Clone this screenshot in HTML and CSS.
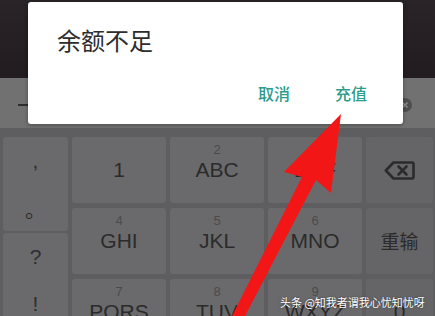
FILE: index.html
```html
<!DOCTYPE html>
<html>
<head>
<meta charset="utf-8">
<link rel="stylesheet" href="styles.css">
</head>
<body>
<div class="screen">
  <div class="top"></div>
  <div class="candbar">
    <span class="cursor"></span>
    <svg class="clear" width="14" height="14" viewBox="0 0 14 14"><circle cx="7" cy="7" r="7" fill="#4e4e4e"/><path d="M4.5 4.5 L9.5 9.5 M9.5 4.5 L4.5 9.5" stroke="#8a8a8a" stroke-width="1.6"/></svg>
  </div>
  <div class="keyboard">
    <div class="side">
      <div class="sidebox">
        <div class="sidekey">,</div>
        <div class="sidekey">。</div>
      </div>
      <div class="sidebox">
        <div class="sidekey">?</div>
        <div class="sidekey">!</div>
      </div>
    </div>
    <div class="key"><span class="num"></span><span class="lab">1</span></div>
    <div class="key"><span class="num">2</span><span class="lab">ABC</span></div>
    <div class="key"><span class="num">3</span><span class="lab">DEF</span></div>
    <div class="key fn">
      <svg class="bksp" width="31" height="19" viewBox="0 0 31 19"><path d="M9.5 1.5 H28 Q29.5 1.5 29.5 3 V16 Q29.5 17.5 28 17.5 H9.5 L1.8 9.5 Z" fill="none" stroke="#2b2b2b" stroke-width="2.6" stroke-linejoin="round"/><path d="M14.5 5.5 L22.5 13.5 M22.5 5.5 L14.5 13.5" stroke="#2b2b2b" stroke-width="2.6" stroke-linecap="round"/></svg>
    </div>
    <div class="key"><span class="num">4</span><span class="lab">GHI</span></div>
    <div class="key"><span class="num">5</span><span class="lab">JKL</span></div>
    <div class="key"><span class="num">6</span><span class="lab">MNO</span></div>
    <div class="key fn"><span class="cn">重输</span></div>
    <div class="key"><span class="num">7</span><span class="lab">PQRS</span></div>
    <div class="key"><span class="num">8</span><span class="lab">TUV</span></div>
    <div class="key"><span class="num">9</span><span class="lab">WXYZ</span></div>
    <div class="key fn"><span class="num"></span><span class="lab">0</span></div>
  </div>

  <div class="dialog">
    <div class="title">余额不足</div>
    <div class="actions">
      <span class="btn">取消</span>
      <span class="btn">充值</span>
    </div>
  </div>

  <svg class="arrow" width="435" height="316" viewBox="0 0 435 316">
    <polygon points="341,114 331,193 316,180 244,318 231,318 302,177 284,172" fill="#f31616"/>
  </svg>

  <div class="watermark">头条 @知我者谓我心忧知忧呀</div>
</div>
</body>
</html>
```
FILE: styles.css
```css
html, body {
  margin: 0;
  padding: 0;
}
body {
  width: 435px;
  height: 316px;
  overflow: hidden;
  background: #5d5d5f;
  font-family: "Liberation Sans", "Noto Sans CJK SC", sans-serif;
}
.screen {
  position: relative;
  width: 435px;
  height: 316px;
  overflow: hidden;
}
.top {
  height: 78px;
  background: linear-gradient(#2a2327, #221c20);
}
.candbar {
  height: 50px;
  background: #717172;
  display: flex;
  align-items: center;
  justify-content: space-between;
  padding: 0 23px 0 18px;
}
.cursor {
  display: block;
  width: 10px;
  height: 2px;
  background: #2e2e2e;
  margin-top: 3px;
}
.clear {
  display: block;
  margin-top: 3px;
}
.keyboard {
  display: grid;
  grid-template-columns: 65px 94px 94px 94px 67px;
  grid-template-rows: 66px 66px 66px;
  column-gap: 4px;
  row-gap: 5px;
  padding: 9px 2px 0 3px;
  background: #5e5e60;
}
.side {
  grid-row: 1 / 4;
  display: flex;
  flex-direction: column;
  gap: 2px;
}
.sidebox {
  height: 94px;
  background: #6a6a6c;
  border-radius: 3px;
  display: flex;
  flex-direction: column;
}
.sidekey {
  height: 47px;
  display: flex;
  align-items: center;
  justify-content: center;
  font-size: 21px;
  color: #2e2e2e;
}
.key {
  background: #6a6a6c;
  border-radius: 3px;
  display: flex;
  flex-direction: column;
  align-items: center;
  padding-top: 6px;
  box-sizing: border-box;
}
.key.fn {
  background: #656567;
  justify-content: center;
  padding-top: 0;
}
.key.fn .num { display: none; }
.key.fn .lab { margin-top: 0; }
.num {
  display: block;
  height: 14px;
  line-height: 14px;
  font-size: 13px;
  color: #4a4a4b;
}
.lab {
  display: block;
  margin-top: 1px;
  height: 24px;
  line-height: 24px;
  font-size: 21px;
  color: #2b2b2b;
}
.cn {
  font-family: "Noto Sans CJK SC", sans-serif;
  font-size: 19px;
  color: #2b2b2b;
  line-height: 24px;
}
.bksp {
  display: block;
}
.dialog {
  position: absolute;
  left: 28px;
  top: 2px;
  width: 375px;
  height: 122px;
  background: #ffffff;
  border-radius: 3px;
  box-shadow: 0 1px 4px rgba(0, 0, 0, 0.35);
  box-sizing: border-box;
  padding: 24px 36px 0 29px;
  display: flex;
  flex-direction: column;
  font-family: "Noto Sans CJK SC", sans-serif;
}
.title {
  font-size: 24px;
  line-height: 28px;
  color: #2d2d2d;
}
.actions {
  margin-top: 29px;
  display: flex;
  justify-content: flex-end;
  gap: 45px;
}
.btn {
  font-size: 16px;
  line-height: 20px;
  font-weight: 500;
  color: #2c9c8c;
}
.arrow {
  position: absolute;
  left: 0;
  top: 0;
}
.watermark {
  position: absolute;
  left: 280px;
  top: 294px;
  font-family: "Noto Sans CJK SC", sans-serif;
  font-size: 11px;
  line-height: 16px;
  color: #ffffff;
  text-shadow: 0 0 2px rgba(0, 0, 0, 0.6);
  white-space: nowrap;
}
```
